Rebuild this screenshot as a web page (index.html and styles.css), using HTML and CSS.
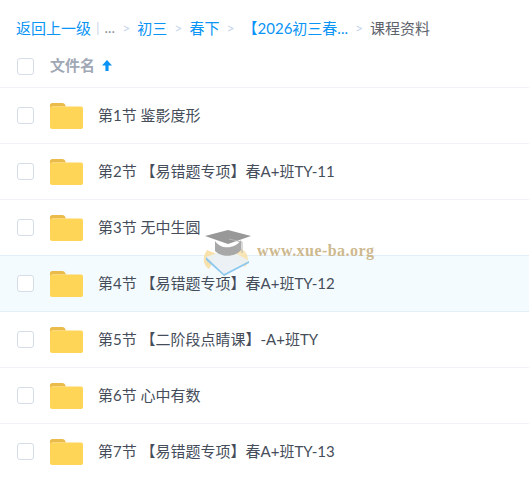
FILE: index.html
```html
<!DOCTYPE html>
<html lang="zh-CN">
<head>
<meta charset="utf-8">
<title>课程资料</title>
<link rel="stylesheet" href="styles.css">
</head>
<body>
<div class="page">
  <nav class="crumbs">
    <a class="link">返回上一级</a><span class="bar">|</span><span class="dots">...</span>
    <span class="sep">&gt;</span><a class="link">初三</a>
    <span class="sep">&gt;</span><a class="link">春下</a>
    <span class="sep">&gt;</span><a class="link long">【2026初三春...</a>
    <span class="sep">&gt;</span><span class="current">课程资料</span>
  </nav>
  <div class="head">
    <span class="check"></span>
    <span class="title">文件名</span>
    <svg class="arrow" width="10" height="11" viewBox="0 0 10 11"><path d="M5 0 L10 5.500 H6.600 V11 H3.400 V5.500 H0 Z" fill="#0a94f5"/></svg>
  </div>
  <ul class="list">
    <li class="row"><span class="check"></span><svg class="folder" width="33" height="26" viewBox="0 0 33 26"><path d="M2 0H12C14 0 15 1 16 3.5H2Z M0 2C0 1 1 0 2 0V6H0Z" fill="#eabb48"/><rect y="3.500" width="33" height="22.500" rx="2" fill="#ffd558"/></svg><span class="name">第1节 鉴影度形</span></li>
    <li class="row"><span class="check"></span><svg class="folder" width="33" height="26" viewBox="0 0 33 26"><path d="M2 0H12C14 0 15 1 16 3.5H2Z M0 2C0 1 1 0 2 0V6H0Z" fill="#eabb48"/><rect y="3.500" width="33" height="22.500" rx="2" fill="#ffd558"/></svg><span class="name">第2节 【易错题专项】春A+班TY-11</span></li>
    <li class="row"><span class="check"></span><svg class="folder" width="33" height="26" viewBox="0 0 33 26"><path d="M2 0H12C14 0 15 1 16 3.5H2Z M0 2C0 1 1 0 2 0V6H0Z" fill="#eabb48"/><rect y="3.500" width="33" height="22.500" rx="2" fill="#ffd558"/></svg><span class="name">第3节 无中生圆</span></li>
    <li class="row active"><span class="check"></span><svg class="folder" width="33" height="26" viewBox="0 0 33 26"><path d="M2 0H12C14 0 15 1 16 3.5H2Z M0 2C0 1 1 0 2 0V6H0Z" fill="#eabb48"/><rect y="3.500" width="33" height="22.500" rx="2" fill="#ffd558"/></svg><span class="name">第4节 【易错题专项】春A+班TY-12</span></li>
    <li class="row"><span class="check"></span><svg class="folder" width="33" height="26" viewBox="0 0 33 26"><path d="M2 0H12C14 0 15 1 16 3.5H2Z M0 2C0 1 1 0 2 0V6H0Z" fill="#eabb48"/><rect y="3.500" width="33" height="22.500" rx="2" fill="#ffd558"/></svg><span class="name">第5节 【二阶段点睛课】-A+班TY</span></li>
    <li class="row"><span class="check"></span><svg class="folder" width="33" height="26" viewBox="0 0 33 26"><path d="M2 0H12C14 0 15 1 16 3.5H2Z M0 2C0 1 1 0 2 0V6H0Z" fill="#eabb48"/><rect y="3.500" width="33" height="22.500" rx="2" fill="#ffd558"/></svg><span class="name">第6节 心中有数</span></li>
    <li class="row"><span class="check"></span><svg class="folder" width="33" height="26" viewBox="0 0 33 26"><path d="M2 0H12C14 0 15 1 16 3.5H2Z M0 2C0 1 1 0 2 0V6H0Z" fill="#eabb48"/><rect y="3.500" width="33" height="22.500" rx="2" fill="#ffd558"/></svg><span class="name">第7节 【易错题专项】春A+班TY-13</span></li>
  </ul>
  <div class="mark">
    <svg class="mark-icon" width="50" height="46" viewBox="0 0 50 46">
      <path d="M4 20C-1 27 0 36 6 39L14 24Z" fill="#f8dc9c" opacity=".85"/>
      <path d="M36 18C44 20 48 30 42 37L30 26Z" fill="#f8e0a8" opacity=".85"/>
      <path d="M3 27L26 19L46 31L21 44Z" fill="#eaf0f3" opacity=".95"/>
      <path d="M3 27L21 44L46 31L46 33L21 46L3 30Z" fill="#8cc8ee"/>
      <path d="M12 11C18 20 32 19 38 10V20C33 27 18 28 12 21Z" fill="#a8a8a8"/>
      <path d="M2 6L25 0L48 6L25 14Z" fill="#989898"/>
      <path d="M26 9L39 12V23" stroke="#b5b5b5" fill="none"/>
    </svg>
    <span class="mark-text">www.xue-ba.org</span>
  </div>
</div>
</body>
</html>
```
FILE: styles.css
```css
* { box-sizing: border-box; }
html, body { margin: 0; padding: 0; background: #fff; }
.page {
  position: relative;
  width: 529px;
  height: 477px;
  overflow: hidden;
  font-family: Lato, "Noto Sans CJK SC", sans-serif;
  font-size: 15px;
  color: #454d5a;
}
.crumbs {
  display: flex;
  align-items: center;
  height: 20px;
  margin-top: 17px;
  padding-left: 16px;
  white-space: nowrap;
}
.link { color: #0a94f5; }
.bar { color: #c9d8ec; margin-left: 5px; font-size: 14px; }
.dots { color: #8e96a3; margin-left: 5px; }
.sep { color: #c4d5ee; margin: 0 7px 0 7px; font-size: 14px; }
.long { margin-left: 1px; }
.current { color: #5d626b; }
.head {
  display: flex;
  align-items: center;
  height: 51px;
  padding-left: 17px;
  padding-top: 8px;
  border-bottom: 1px solid #f1f3f8;
}
.title { margin-left: 16px; color: #a0a7b5; font-weight: 700; line-height: 20px; margin-top: -2px; }
.arrow { margin-left: 7px; margin-top: -1px; }
.check {
  flex: none;
  width: 17px;
  height: 17px;
  background: #fff;
  border: 1px solid #d5dde8;
  border-radius: 3px;
}
.list { list-style: none; margin: 0; padding: 0; }
.row {
  display: flex;
  align-items: center;
  height: 56px;
  padding-left: 17px;
  border-bottom: 1px solid #f1f3f8;
}
.row.active { background: #f4fbff; border-top: 1px solid #e2eef8; border-bottom-color: #e2eef8; margin-top: -1px; height: 57px; }
.folder { margin-left: 16px; flex: none; }
.name { margin-left: 15px; white-space: nowrap; line-height: 20px; margin-top: -2px; }
.mark {
  position: absolute;
  left: 203px;
  top: 230px;
  display: flex;
  align-items: center;
  pointer-events: none;
}
.mark-icon { flex: none; }
.mark-text {
  margin: -5px 0 0 4px;
  font-family: "Liberation Serif", serif;
  font-weight: 700;
  font-size: 16px;
  letter-spacing: .45px;
  color: #cdb98f;
}
```
